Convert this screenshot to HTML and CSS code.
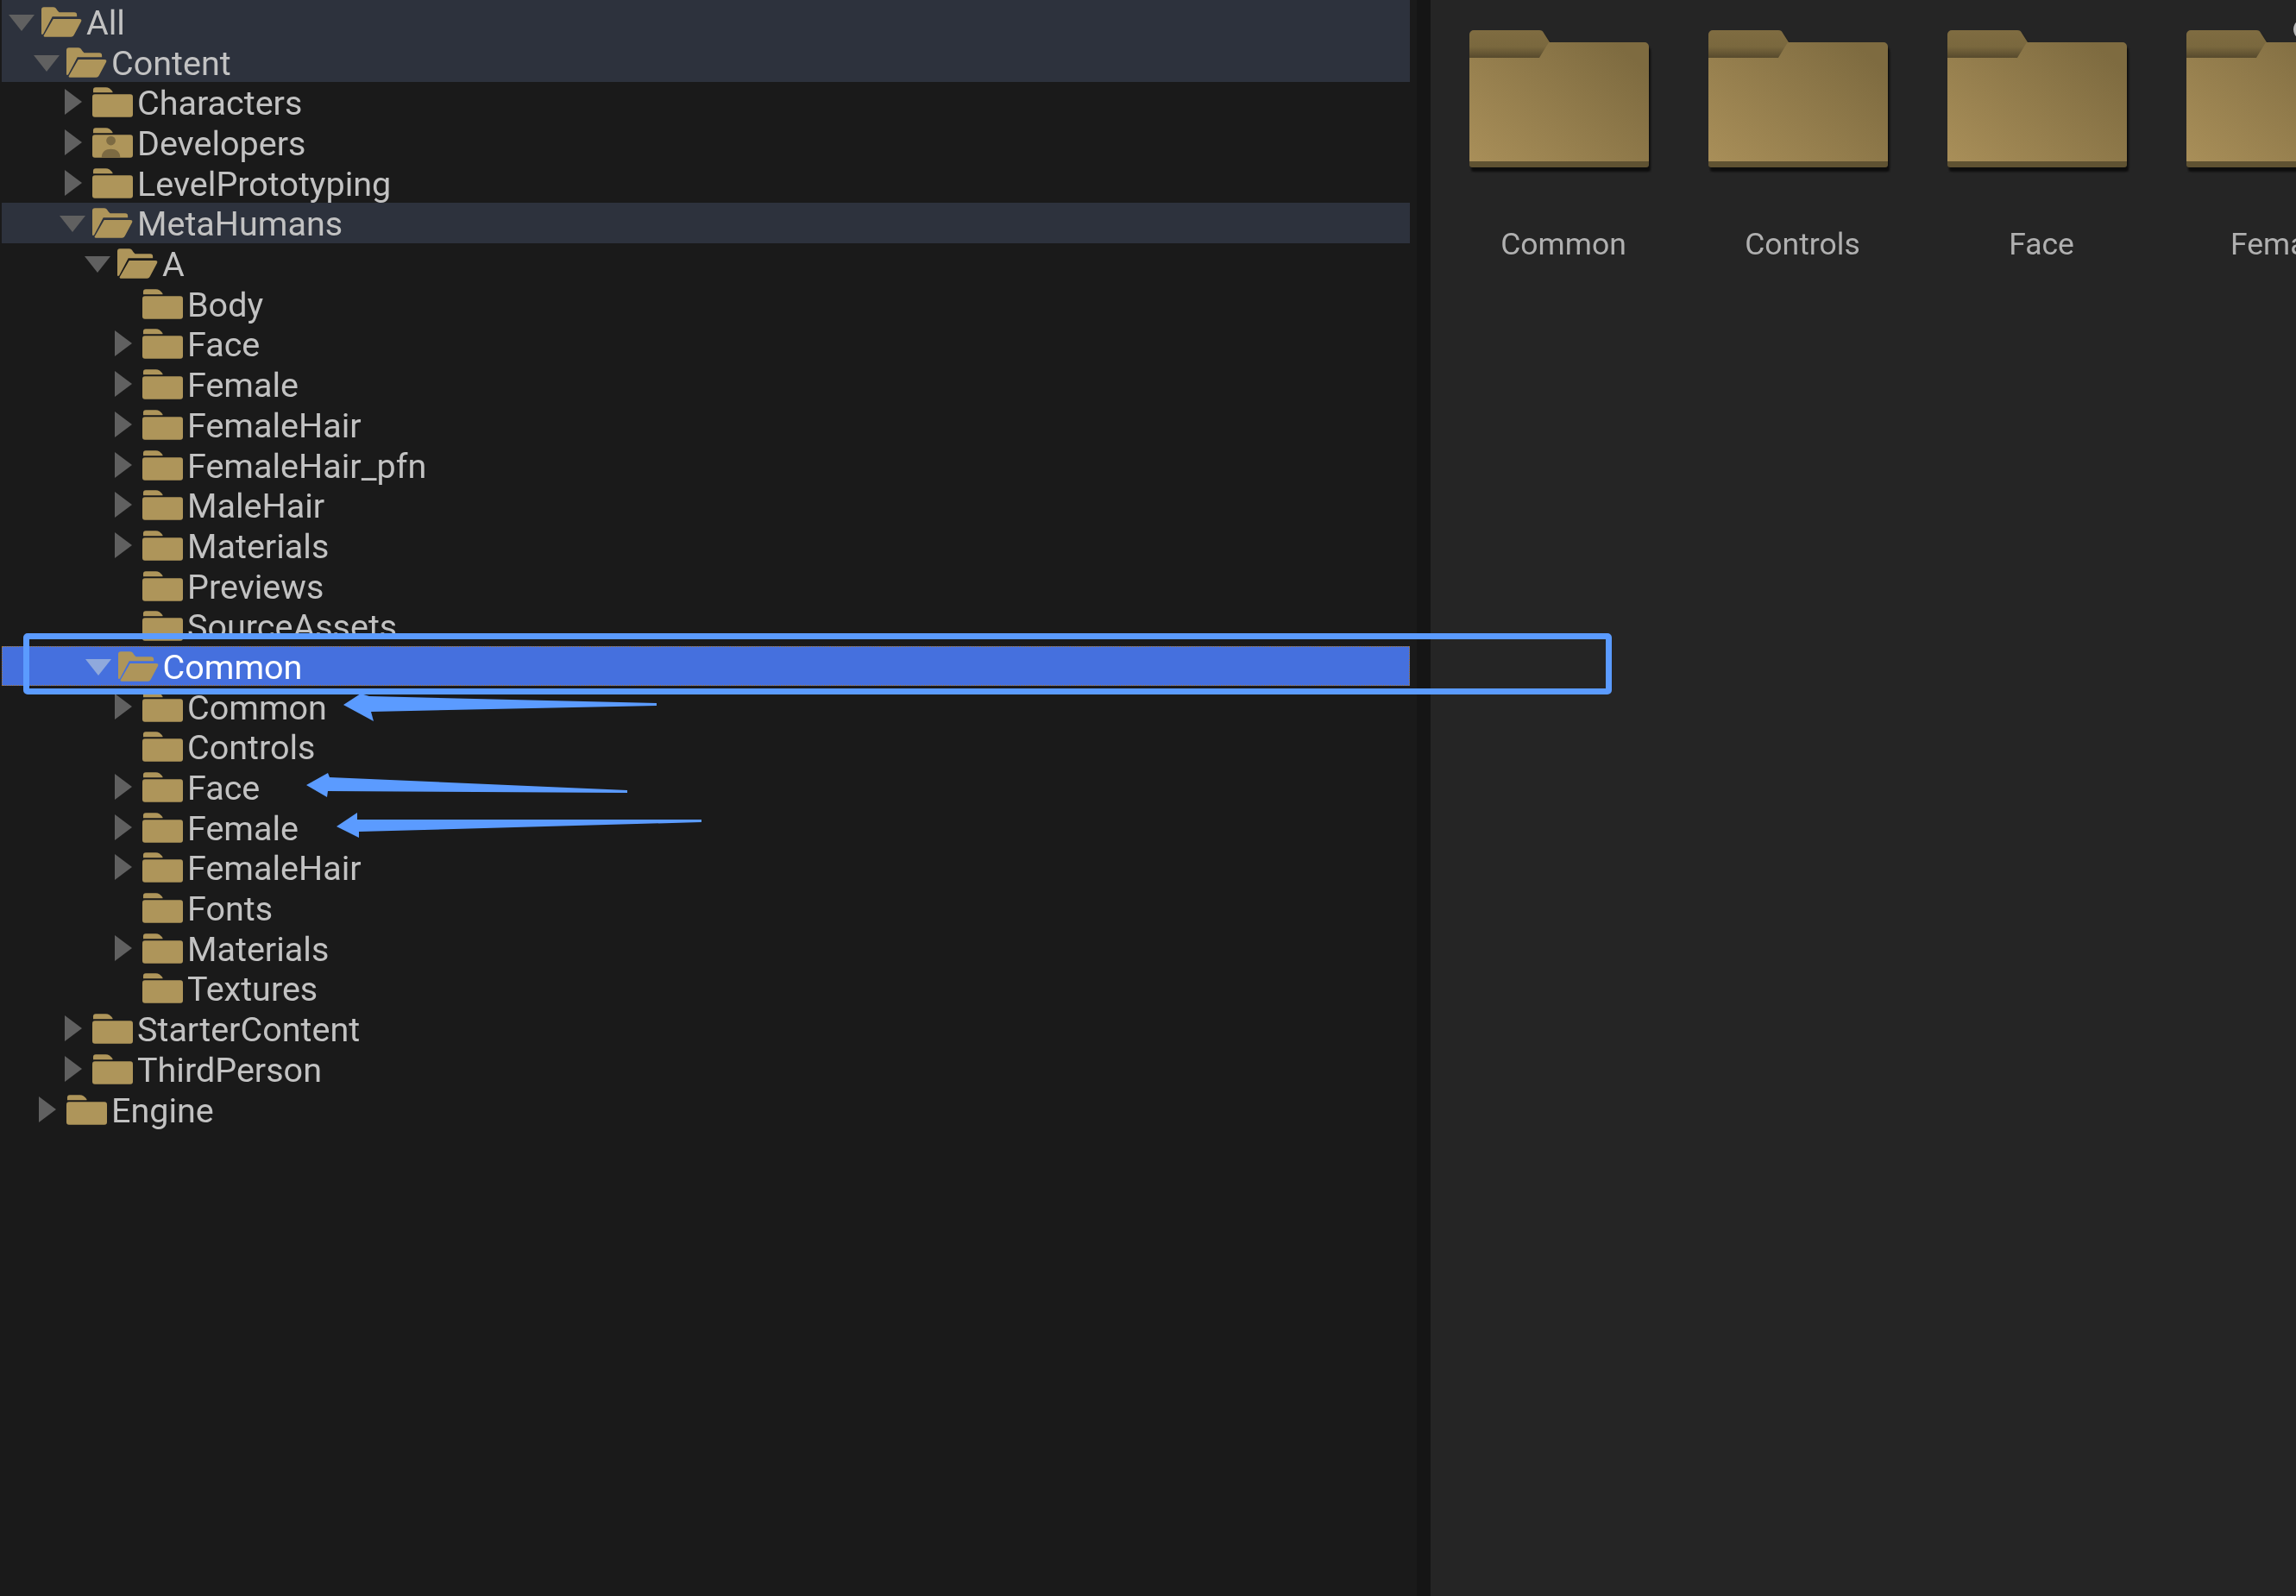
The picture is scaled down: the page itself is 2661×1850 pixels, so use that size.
FILE: index.html
```html
<!DOCTYPE html>
<html lang="en">
<head>
    <meta charset="UTF-8">
    <title>Content Browser</title>
    <link rel="stylesheet" href="styles.css">
</head>
<body>
    <svg class="defs" width="0" height="0">
        <symbol id="closed" viewBox="0 0 48 36">
            <path d="M1 7V4a3 3 0 0 1 3-3h12c3 0 6 2 8 5v1z" fill="#ae955a"/>
            <path d="M0 12a3 3 0 0 1 3-3h42a3 3 0 0 1 3 3v21a3 3 0 0 1-3 3H3a3 3 0 0 1-3-3z" fill="#ae955a"/>
        </symbol>
        <symbol id="person" viewBox="0 0 48 36">
            <path d="M1 7V4a3 3 0 0 1 3-3h12c3 0 6 2 8 5v1z" fill="#ae955a"/>
            <path d="M0 12a3 3 0 0 1 3-3h42a3 3 0 0 1 3 3v21a3 3 0 0 1-3 3H3a3 3 0 0 1-3-3z" fill="#ae955a"/>
            <circle cx="22" cy="16" r="5.5" fill="#7c6a42"/>
            <path d="M11 36c0-7 5-10 11-10s11 3 11 10z" fill="#7c6a42"/>
        </symbol>
        <symbol id="open" viewBox="0 0 48 36">
            <path d="M0 4a3 3 0 0 1 3-3h11c2 0 3 1 5 4l2 2h18a3 3 0 0 1 3 3v2H13L2 33H0z" fill="#ae955a"/>
            <path d="M14 15h31c2 0 3 1 2 3l-8 15c-1 2-2 3-4 3H4c-1 0-2-1-1-2z" fill="#ae955a"/>
        </symbol>
        <symbol id="bigfolder" viewBox="0 0 208 162" preserveAspectRatio="none">
            <defs>
                <linearGradient id="bodygrad" x1="0" y1="1" x2="1" y2="0.25">
                    <stop offset="0" stop-color="#a98f59"/>
                    <stop offset="1" stop-color="#7e6b40"/>
                </linearGradient>
                <linearGradient id="tabgrad" x1="0" y1="0" x2="0" y2="1">
                    <stop offset="0" stop-color="#7f6c41"/>
                    <stop offset="0.6" stop-color="#7a683e"/>
                    <stop offset="1" stop-color="#574a2d"/>
                </linearGradient>
            </defs>
            <path d="M0 6a5 5 0 0 1 5-5h76c3 0 4 1 5 3l7 11-8 18H0z" fill="url(#tabgrad)"/>
            <path d="M0 33h81l11-18h111a5 5 0 0 1 5 5v135H0z" fill="url(#bodygrad)"/>
            <path d="M0 153h208v4a3 3 0 0 1-3 3H3a3 3 0 0 1-3-3z" fill="#5f5232"/>
        </symbol>
    </svg>

    <div class="browser">
        <div class="tree">
            <div class="row lv0 hl first"><span class="arrow down"></span><svg class="icon"><use href="#open"/></svg><span class="name">All</span></div>
            <div class="row lv1 hl"><span class="arrow down"></span><svg class="icon"><use href="#open"/></svg><span class="name">Content</span></div>
            <div class="row lv2"><span class="arrow right"></span><svg class="icon"><use href="#closed"/></svg><span class="name">Characters</span></div>
            <div class="row lv2"><span class="arrow right"></span><svg class="icon"><use href="#person"/></svg><span class="name">Developers</span></div>
            <div class="row lv2"><span class="arrow right"></span><svg class="icon"><use href="#closed"/></svg><span class="name">LevelPrototyping</span></div>
            <div class="row lv2 hl"><span class="arrow down"></span><svg class="icon"><use href="#open"/></svg><span class="name">MetaHumans</span></div>
            <div class="row lv3"><span class="arrow down"></span><svg class="icon"><use href="#open"/></svg><span class="name">A</span></div>
            <div class="row lv4"><span class="arrow"></span><svg class="icon"><use href="#closed"/></svg><span class="name">Body</span></div>
            <div class="row lv4"><span class="arrow right"></span><svg class="icon"><use href="#closed"/></svg><span class="name">Face</span></div>
            <div class="row lv4"><span class="arrow right"></span><svg class="icon"><use href="#closed"/></svg><span class="name">Female</span></div>
            <div class="row lv4"><span class="arrow right"></span><svg class="icon"><use href="#closed"/></svg><span class="name">FemaleHair</span></div>
            <div class="row lv4"><span class="arrow right"></span><svg class="icon"><use href="#closed"/></svg><span class="name">FemaleHair_pfn</span></div>
            <div class="row lv4"><span class="arrow right"></span><svg class="icon"><use href="#closed"/></svg><span class="name">MaleHair</span></div>
            <div class="row lv4"><span class="arrow right"></span><svg class="icon"><use href="#closed"/></svg><span class="name">Materials</span></div>
            <div class="row lv4"><span class="arrow"></span><svg class="icon"><use href="#closed"/></svg><span class="name">Previews</span></div>
            <div class="row lv4"><span class="arrow"></span><svg class="icon"><use href="#closed"/></svg><span class="name">SourceAssets</span></div>
            <div class="row lv3 selected"><span class="arrow down"></span><svg class="icon"><use href="#open"/></svg><span class="name">Common</span></div>
            <div class="row lv4"><span class="arrow right"></span><svg class="icon"><use href="#closed"/></svg><span class="name">Common</span></div>
            <div class="row lv4"><span class="arrow"></span><svg class="icon"><use href="#closed"/></svg><span class="name">Controls</span></div>
            <div class="row lv4"><span class="arrow right"></span><svg class="icon"><use href="#closed"/></svg><span class="name">Face</span></div>
            <div class="row lv4"><span class="arrow right"></span><svg class="icon"><use href="#closed"/></svg><span class="name">Female</span></div>
            <div class="row lv4"><span class="arrow right"></span><svg class="icon"><use href="#closed"/></svg><span class="name">FemaleHair</span></div>
            <div class="row lv4"><span class="arrow"></span><svg class="icon"><use href="#closed"/></svg><span class="name">Fonts</span></div>
            <div class="row lv4"><span class="arrow right"></span><svg class="icon"><use href="#closed"/></svg><span class="name">Materials</span></div>
            <div class="row lv4"><span class="arrow"></span><svg class="icon"><use href="#closed"/></svg><span class="name">Textures</span></div>
            <div class="row lv2"><span class="arrow right"></span><svg class="icon"><use href="#closed"/></svg><span class="name">StarterContent</span></div>
            <div class="row lv2"><span class="arrow right"></span><svg class="icon"><use href="#closed"/></svg><span class="name">ThirdPerson</span></div>
            <div class="row lv1"><span class="arrow right"></span><svg class="icon"><use href="#closed"/></svg><span class="name">Engine</span></div>
        </div>
        <div class="splitter"></div>
        <div class="assets">
            <div class="tile"><svg class="bigicon"><use href="#bigfolder"/></svg><div class="tile-name">Common</div></div>
            <div class="tile"><svg class="bigicon"><use href="#bigfolder"/></svg><div class="tile-name">Controls</div></div>
            <div class="tile"><svg class="bigicon"><use href="#bigfolder"/></svg><div class="tile-name">Face</div></div>
            <div class="tile"><svg class="bigicon"><use href="#bigfolder"/></svg><div class="tile-name">Female</div></div>
        </div>
    </div>

    <!-- annotations drawn on top of the screenshot -->
    <div class="badge"></div>
    <div class="frame"></div>
    <svg class="marks" width="2661" height="1850">
        <polygon points="398,817 418,804 428,807 761,815 761,818 430,825 433,836"/>
        <polygon points="355,910 380,896 382,901 727,916 727,919 380,917 379,924"/>
        <polygon points="390,958 414,942 414,950 813,950 813,953 416,964 416,971"/>
    </svg>
</body>
</html>
```

FILE: styles.css
```css
html, body {
    margin: 0;
    padding: 0;
    height: 100%;
    overflow: hidden;
    background-color: #1a1a1a;
    font-family: Roboto, "Liberation Sans", sans-serif;
}
.defs {
    position: absolute;
}
.browser {
    display: flex;
    width: 2661px;
    height: 1850px;
    filter: blur(0.5px);
}
.tree {
    width: 1632px;
    padding: 0 8px 0 2px;
    background-color: #1a1a1a;
}
.splitter {
    width: 16px;
    background-color: #151515;
}
.assets {
    flex: 1;
    display: flex;
    padding: 34px 0 0 45px;
    overflow: hidden;
    background-color: #252525;
}
.row {
    display: flex;
    align-items: center;
    height: 46.7px;
    color: #c2c2c2;
    font-size: 39.5px;
}
.first {
    box-sizing: border-box;
    height: 48.3px;
    padding-top: 1.6px;
}
.lv0 { padding-left: 8px; }
.lv1 { padding-left: 37px; }
.lv2 { padding-left: 67px; }
.lv3 { padding-left: 96px; }
.lv4 { padding-left: 125px; }
.hl {
    background-color: #2d323d;
}
.selected {
    box-sizing: border-box;
    margin-left: -0.5px;
    background-color: #4570de;
    border: 1.5px dotted #a8762a;
    color: #fff;
}
.arrow {
    flex: none;
    width: 30px;
    height: 30px;
    margin-right: 8px;
    position: relative;
}
.down::after {
    content: "";
    position: absolute;
    left: 0;
    top: 7px;
    border-style: solid;
    border-width: 19px 15px 0 15px;
    border-color: #606060 transparent transparent transparent;
}
.right::after {
    content: "";
    position: absolute;
    left: 6px;
    top: 0;
    border-style: solid;
    border-width: 15px 0 15px 20px;
    border-color: transparent transparent transparent #606060;
}
.selected .down::after {
    border-top-color: #8fa9dc;
}
.icon {
    flex: none;
    width: 47px;
    height: 36px;
    margin-right: 5px;
}
.name {
    margin-top: 3px;
    white-space: nowrap;
}
.tile {
    flex: none;
    width: 277px;
}
.bigicon {
    display: block;
    width: 208px;
    height: 162px;
    filter: drop-shadow(2px 5px 1px #0d0d0d);
}
.tile-name {
    width: 208px;
    margin-top: 66px;
    margin-left: 5px;
    text-align: center;
    color: #b0b0b0;
    font-size: 35.5px;
    white-space: nowrap;
}
.badge {
    position: absolute;
    left: 2658px;
    top: 18px;
    width: 40px;
    height: 32px;
    border-radius: 50%;
    background-color: #b9b9b9;
}
.frame {
    position: absolute;
    left: 27px;
    top: 734px;
    width: 1841px;
    height: 71px;
    box-sizing: border-box;
    border: 7px solid #5b9bff;
    border-radius: 5px;
}
.marks {
    position: absolute;
    left: 0;
    top: 0;
}
.marks polygon {
    fill: #5b9bff;
}
```
